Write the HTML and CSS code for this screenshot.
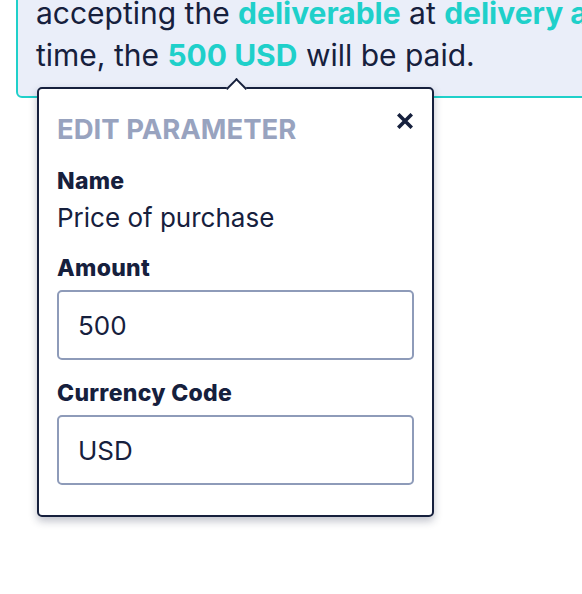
FILE: index.html
```html
<!DOCTYPE html>
<html>
<head>
<meta charset="utf-8">
<link rel="stylesheet" href="styles.css">
</head>
<body>
<div class="page">
  <div class="clause">
    <p class="clause-text">accepting the <span class="param">deliverable</span> at <span class="param">delivery and</span><br>time, the <span class="param">500 USD</span> will be paid.</p>
  </div>
  <div class="popover">
    <div class="popover-head">
      <h2 class="popover-title">EDIT PARAMETER</h2>
      <svg class="close" width="16" height="16" viewBox="0 0 16 16"><path d="M2.5 2.5 L13.5 13.5 M13.5 2.5 L2.5 13.5" stroke="#16203d" stroke-width="3.6" stroke-linecap="square"/></svg>
    </div>
    <div class="field field-first">
      <div class="label">Name</div>
      <div class="value">Price of purchase</div>
    </div>
    <div class="field">
      <div class="label">Amount</div>
      <div class="input">500</div>
    </div>
    <div class="field">
      <div class="label">Currency Code</div>
      <div class="input">USD</div>
    </div>
  </div>
</div>
</body>
</html>
```
FILE: styles.css
```css
html, body {
  margin: 0;
  padding: 0;
  background: #ffffff;
  overflow: hidden;
}
.page {
  position: relative;
  width: 582px;
  height: 594px;
  overflow: hidden;
  font-family: Inter, "Liberation Sans", sans-serif;
  color: #16203d;
}
.clause {
  margin-top: -40px;
  margin-left: 16px;
  width: 800px;
  background: #eaeef9;
  border: 2px solid #1fd0ca;
  border-radius: 6px;
  padding: 30px 20px 20px 18px;
  box-sizing: border-box;
}
.clause-text {
  margin: 0;
  font-size: 30px;
  line-height: 42px;
  white-space: nowrap;
}
.param {
  color: #1fd0ca;
  font-weight: 700;
}
.popover {
  position: absolute;
  left: 37px;
  top: 87px;
  width: 397px;
  height: 430px;
  box-sizing: border-box;
  background: #ffffff;
  border: 2px solid #16203d;
  border-radius: 5px;
  box-shadow: 0 4px 8px rgba(20, 30, 60, 0.28);
  padding: 20px 18px 0 18px;
}
.popover::before {
  content: "";
  position: absolute;
  left: 190px;
  top: -8px;
  width: 13px;
  height: 13px;
  background: #ffffff;
  border-top: 2px solid #16203d;
  border-left: 2px solid #16203d;
  transform: rotate(45deg);
}
.popover-head {
  display: flex;
  justify-content: space-between;
  align-items: flex-start;
}
.popover-title {
  margin: 0;
  font-size: 27.5px;
  line-height: 40px;
  font-weight: 700;
  color: #98a3bf;
}
.close {
  margin-top: 4px;
  margin-right: 1px;
}
.field {
  margin-top: 18px;
}
.field-first {
  margin-top: 18px;
}
.field + .field + .field {
  margin-top: 19px;
}
.label {
  font-size: 23px;
  font-weight: 800;
  line-height: 28px;
  letter-spacing: 0.3px;
}
.value {
  font-size: 26px;
  line-height: 36px;
  margin-top: 5px;
}
.input {
  margin-top: 8px;
  height: 70px;
  box-sizing: border-box;
  border: 2px solid #8e9bb9;
  border-radius: 5px;
  padding: 0 19px;
  display: flex;
  align-items: center;
  font-size: 26px;
}
```
